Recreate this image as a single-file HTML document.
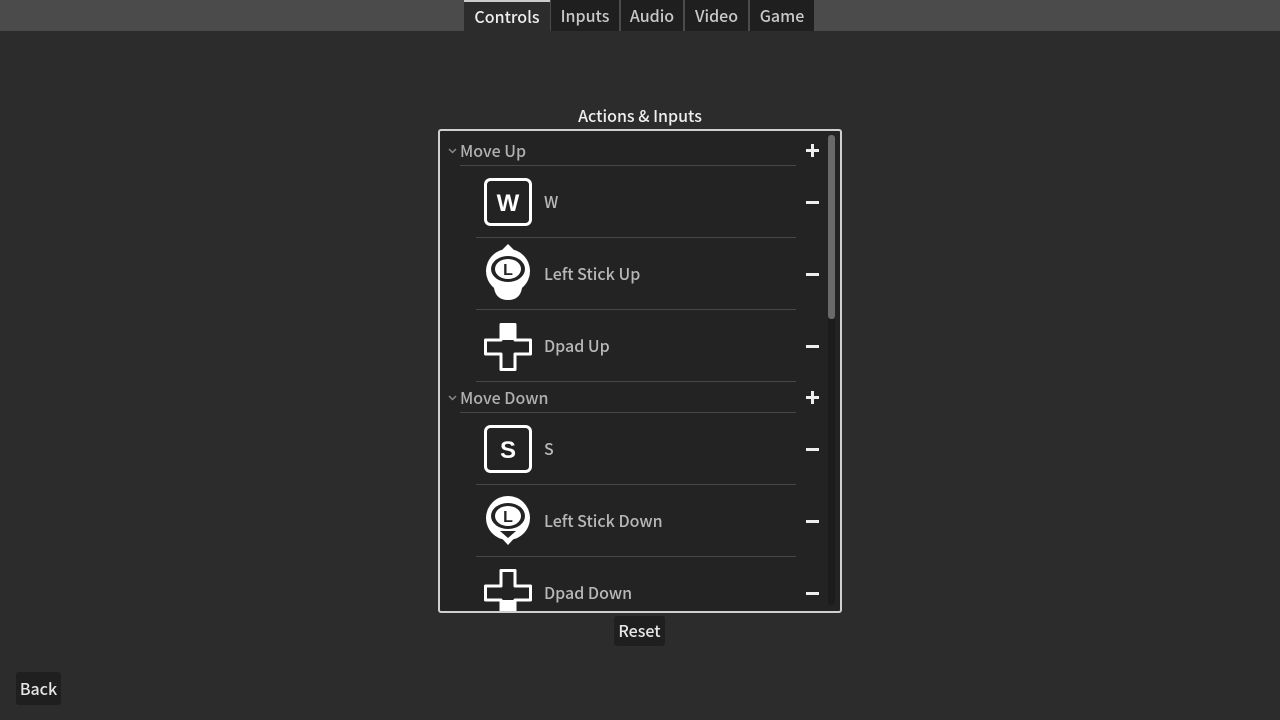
<!DOCTYPE html>
<html><head><style>
*{margin:0;padding:0;box-sizing:border-box}
body{width:1280px;height:720px;background:#2c2c2c;font-family:"Noto Sans CJK JP","Liberation Sans",sans-serif;font-size:16px;font-weight:500;color:#ccc;position:relative;overflow:hidden}
.top{position:absolute;left:0;top:0;width:1280px;height:31px;background:#4b4b4b}
.tab{position:absolute;top:0;height:31px;background:#1f1f1f;color:#c8c8c8;text-align:center;line-height:31px;font-size:16px}
.tab.act{background:#2c2c2c;color:#eee;border-top:2px solid #ccc;line-height:28px}
.a{position:absolute}
.panel{position:absolute;left:438px;top:129px;width:404px;height:484px;background:#232323;border:2px solid #d0d0d0;border-radius:3px;overflow:hidden}
.hdr{position:absolute;left:20px;color:#b0b0b0;font-size:16px}
.line{position:absolute;height:1px;background:#474747}
.lbl{position:absolute;left:104px;color:#b8b8b8;font-size:16px}
.minus{position:absolute;left:366px;width:13px;height:3px;background:#eee}
.plus{position:absolute;left:366px;width:13px;height:13px}
.plus:before{content:"";position:absolute;left:0;top:5px;width:13px;height:3px;background:#eee}
.plus:after{content:"";position:absolute;left:5px;top:0;width:3px;height:13px;background:#eee}
.btn{position:absolute;background:#1f1f1f;color:#e6e6e6;text-align:center;border-radius:3px}
</style></head><body>
<div class="top"></div>
<div class="tab act" style="left:464px;width:86px">Controls</div>
<div class="tab" style="left:551px;width:68px">Inputs</div>
<div class="tab" style="left:621px;width:62px">Audio</div>
<div class="tab" style="left:685px;width:63px">Video</div>
<div class="tab" style="left:750px;width:64px">Game</div>
<div class="a" style="left:438px;width:404px;top:103px;text-align:center;color:#eee;font-size:16px">Actions &amp; Inputs</div>
<div class="panel">
<div class="a" style="left:388px;top:4px;width:7px;height:470px;background:#1c1c1c;border-radius:3px"></div>
<div class="a" style="left:388px;top:4px;width:7px;height:184px;background:#6a6a6a;border-radius:3px"></div>

<svg class="a" style="left:8px;top:16px" width="10" height="8"><path d="M1 2 L4.5 5.5 L8 2" stroke="#888" stroke-width="1.5" fill="none"/></svg>
<div class="hdr" style="top:7px">Move Up</div>
<div class="plus" style="top:13px"></div>
<div class="line" style="left:20px;width:336px;top:34px"></div>

<svg class="a" style="left:44px;top:47px" width="48" height="48"><rect x="1.5" y="1.5" width="45" height="45" rx="5" fill="none" stroke="#fff" stroke-width="3"/><text x="24" y="33" text-anchor="middle" font-family="Liberation Sans" font-weight="bold" font-size="24" fill="#fff">W</text></svg>
<div class="lbl" style="top:58px">W</div>
<div class="minus" style="top:70px"></div>
<div class="line" style="left:36px;width:320px;top:106px"></div>

<svg class="a" style="left:44px;top:113px" width="48" height="56"><path d="M24 0 L31 7 L17 7Z" fill="#fff"/><path d="M10 44 Q12 56 24 56 Q36 56 38 44Z" fill="#fff"/><circle cx="24" cy="27" r="22" fill="#fff"/><ellipse cx="24" cy="25" rx="17" ry="13" fill="#232323"/><ellipse cx="24" cy="25" rx="13" ry="10" fill="#fff"/><text x="24" y="31" text-anchor="middle" font-family="Liberation Sans" font-weight="bold" font-size="16" fill="#232323">L</text></svg>
<div class="lbl" style="top:130px">Left Stick Up</div>
<div class="minus" style="top:142px"></div>
<div class="line" style="left:36px;width:320px;top:178px"></div>

<svg class="a" style="left:44px;top:192px" width="48" height="48"><path d="M17 1.5 H31 V17 H46.5 V31 H31 V46.5 H17 V31 H1.5 V17 H17Z" fill="none" stroke="#fff" stroke-width="3" stroke-linejoin="round"/><rect x="16" y="0" width="16" height="17" rx="3" fill="#fff"/></svg>
<div class="lbl" style="top:202px">Dpad Up</div>
<div class="minus" style="top:214px"></div>
<div class="line" style="left:36px;width:320px;top:250px"></div>

<svg class="a" style="left:8px;top:263px" width="10" height="8"><path d="M1 2 L4.5 5.5 L8 2" stroke="#888" stroke-width="1.5" fill="none"/></svg>
<div class="hdr" style="top:254px">Move Down</div>
<div class="plus" style="top:260px"></div>
<div class="line" style="left:20px;width:336px;top:281px"></div>

<svg class="a" style="left:44px;top:294px" width="48" height="48"><rect x="1.5" y="1.5" width="45" height="45" rx="5" fill="none" stroke="#fff" stroke-width="3"/><text x="24" y="33" text-anchor="middle" font-family="Liberation Sans" font-weight="bold" font-size="24" fill="#fff">S</text></svg>
<div class="lbl" style="top:305px">S</div>
<div class="minus" style="top:317px"></div>
<div class="line" style="left:36px;width:320px;top:353px"></div>

<svg class="a" style="left:44px;top:365px" width="48" height="50"><circle cx="24" cy="22" r="22" fill="#fff"/><path d="M12 36 L24 49 L36 36Z" fill="#fff"/><ellipse cx="24" cy="20" rx="17" ry="13" fill="#232323"/><ellipse cx="24" cy="20" rx="13" ry="10" fill="#fff"/><path d="M16 35 L24 42 L32 35Z" fill="#232323"/><text x="24" y="26" text-anchor="middle" font-family="Liberation Sans" font-weight="bold" font-size="16" fill="#232323">L</text></svg>
<div class="lbl" style="top:377px">Left Stick Down</div>
<div class="minus" style="top:389px"></div>
<div class="line" style="left:36px;width:320px;top:425px"></div>

<svg class="a" style="left:44px;top:438px" width="48" height="48"><path d="M17 1.5 H31 V17 H46.5 V31 H31 V46.5 H17 V31 H1.5 V17 H17Z" fill="none" stroke="#fff" stroke-width="3" stroke-linejoin="round"/><rect x="16" y="31" width="16" height="17" rx="3" fill="#fff"/></svg>
<div class="lbl" style="top:449px">Dpad Down</div>
<div class="minus" style="top:461px"></div>
</div>
<div class="btn" style="left:614px;top:616px;width:51px;height:30px;line-height:29px">Reset</div>
<div class="btn" style="left:16px;top:672px;width:45px;height:33px;line-height:33px">Back</div>
</body></html>
